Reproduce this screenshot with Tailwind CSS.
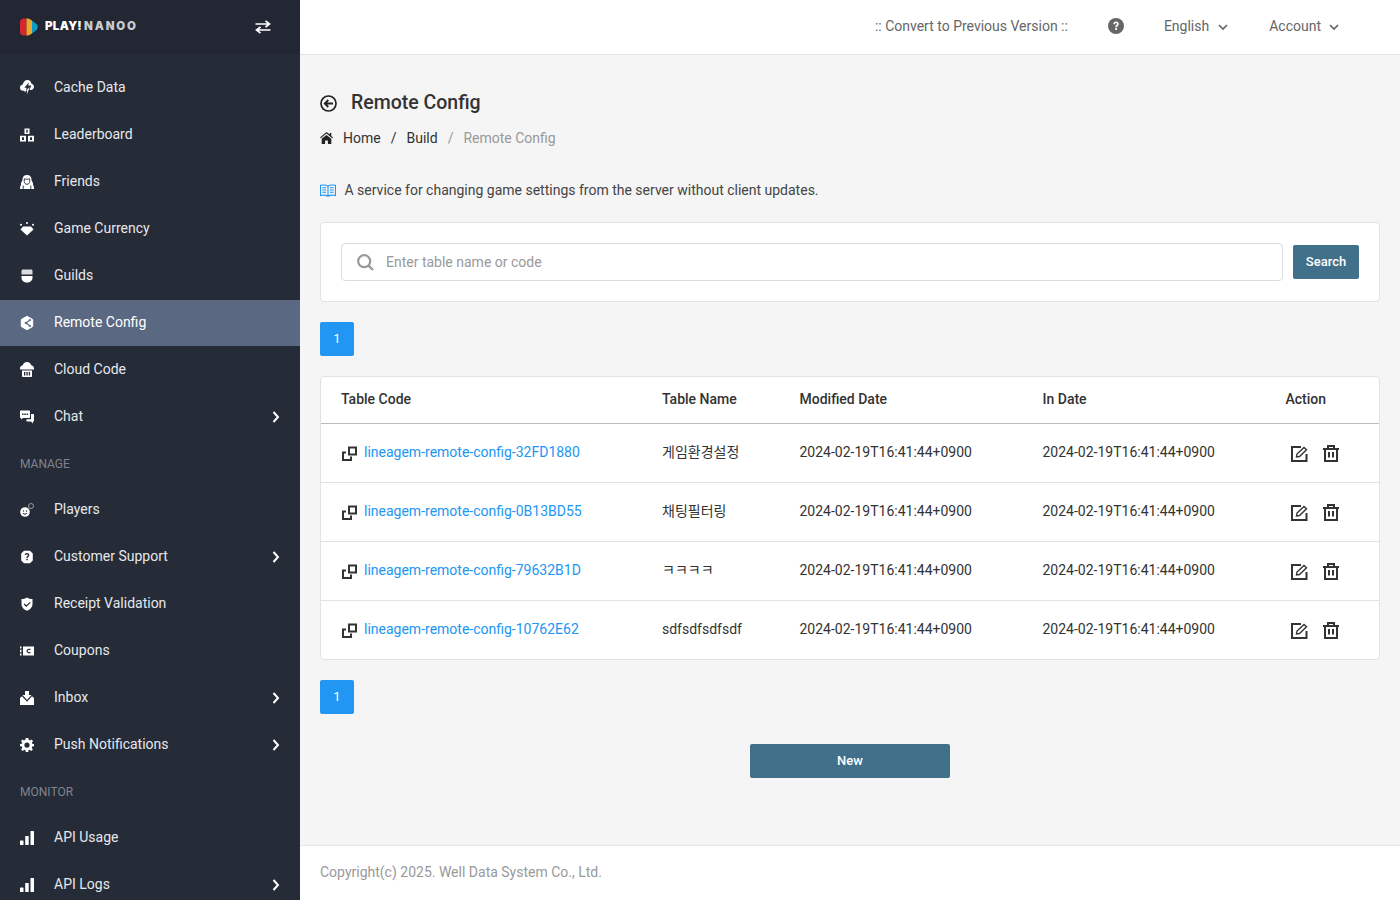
<!DOCTYPE html>
<html lang="en">
<head>
    <meta charset="UTF-8">
    <title>Remote Config</title>
    <script src="https://cdn.jsdelivr.net/npm/@tailwindcss/browser@4"></script>
</head>
<body class="h-screen overflow-hidden flex bg-[#f5f5f5] text-[14px] text-[#333] font-['Roboto','Noto_Sans_CJK_KR',sans-serif]">
    <!-- Sidebar -->
    <aside class="w-[300px] shrink-0 h-full overflow-hidden bg-[#252b37] text-[#e6e8ec]">
        <div class="h-[54px] bg-[#222733] flex items-center pl-[20px] pr-[29px]">
            <svg class="w-[18px] h-[18px]" viewBox="0 0 18 18">
                <path d="M4 0.5H6.5V17.5H4A4 4 0 0 1 0 13.5V4.5A4 4 0 0 1 4 0.5Z" fill="#d8262f"/>
                <path d="M6.5 0.5H8.5L12 2.6V15.4L8.5 17.5H6.5Z" fill="#eda92c"/>
                <path d="M12 2.6L17 6.6Q18.4 9 17 11.4L12 15.4Z" fill="#0f9cc5"/>
            </svg>
            <span class="ml-[7px] text-[11.5px] leading-none font-black tracking-[0.3px] font-['Inter',sans-serif] text-white">PLAY!<span class="text-[#c9cacc] ml-[2px] tracking-[1.8px]">NANOO</span></span>
            <svg class="ml-auto w-[16px] h-[14px]" viewBox="0 0 16 14" fill="none" stroke="#fff" stroke-width="1.7">
                <path d="M0.5 4H14.5M10.5 0.8L14.5 4L10.5 7"/>
                <path d="M15.5 10H1.5M5.5 7L1.5 10L5.5 13.2"/>
            </svg>
        </div>
        <nav class="pt-[10px]">
            <a class="flex items-center h-[47px] pl-[20px] pr-[20px]">
                <svg class="w-[14px] h-[15px] mr-[20px]" viewBox="0 0 14 15" fill="#fff"><path d="M7.500 0C9.600 0 11 1.500 11.300 3.400C12.900 3.800 14 5.100 14 6.700C14 8.500 12.600 10 10.800 10H9.600L11.300 5.500H8.200L9 2.200L4.300 7.800H6.700L5.300 12.500L4.200 10.800H3C1.300 10.800 0 9.400 0 7.700C0 6.100 1.100 4.800 2.700 4.500C3.300 1.900 5.200 0 7.500 0Z"/><path d="M9.800 7.200L6.800 14.500L7.200 10.500H5.800Z"/></svg>
                Cache Data
            </a>
            <a class="flex items-center h-[47px] pl-[20px] pr-[20px]">
                <svg class="w-[14px] h-[14px] mr-[20px]" viewBox="0 0 14 14" fill="#fff" fill-rule="evenodd"><path d="M4.500 0.500H9.500V6H4.500ZM6.300 1.800V4.700H7.700V1.800Z"/><path d="M0 7.800H6V13.500H0ZM2 9.200V12H4V9.200Z"/><path d="M8 7.800H14V13.500H8ZM10 9.200V12H12V9.200Z"/></svg>
                Leaderboard
            </a>
            <a class="flex items-center h-[47px] pl-[20px] pr-[20px]">
                <svg class="w-[14px] h-[14px] mr-[20px]" viewBox="0 0 14 14"><path d="M7 0C10 0 11.500 2 11.500 4.500C11.500 6 12.500 6.800 13 8V10C13.600 10.600 14 11.500 14 14H0C0 11.500 0.400 10.600 1 10V8C1.500 6.800 2.500 6 2.500 4.500C2.500 2 4 0 7 0Z" fill="#fff"/><path d="M4.300 3.800C5.800 4.300 8.200 4.300 9.700 3.800V6.500C9.700 8.200 8.500 9.300 7 9.300C5.500 9.300 4.300 8.200 4.300 6.500Z" fill="#fff" stroke="#252b37" stroke-width="0.900"/><path d="M3.200 10.500V14M10.800 10.500V14" stroke="#252b37" stroke-width="0.900"/></svg>
                Friends
            </a>
            <a class="flex items-center h-[47px] pl-[20px] pr-[20px]">
                <svg class="w-[14px] h-[14px] mr-[20px]" viewBox="0 0 14 14" fill="#fff"><path d="M3 4.500H11L13.500 7.500L7 13.500L0.500 7.500Z"/><circle cx="1" cy="2.800" r="1"/><circle cx="7" cy="1" r="1"/><circle cx="13" cy="2.800" r="1"/></svg>
                Game Currency
            </a>
            <a class="flex items-center h-[47px] pl-[20px] pr-[20px]">
                <svg class="w-[14px] h-[14px] mr-[20px]" viewBox="0 0 14 14" fill="#fff"><path d="M3 0.500H11C12 0.500 12.500 1 12.500 2V5.500H1.500V2C1.500 1 2 0.500 3 0.500Z" fill="#d9dbde"/><path d="M1.500 7H12.500V9C12.500 11.500 10 13.500 7 13.500C4 13.500 1.500 11.500 1.500 9Z"/></svg>
                Guilds
            </a>
            <a class="flex items-center h-[46px] mt-[1px] pb-[1px] pl-[20px] pr-[20px] bg-[#5b6882] text-white">
                <svg class="w-[14px] h-[14px] mr-[20px]" viewBox="0 0 14 14"><path d="M7 0.300L12.700 3.500V10.500L7 13.700L1.300 10.500V3.500Z" fill="#fff" stroke="#fff" stroke-linejoin="round"/><path d="M10 4L6 7L10 10" fill="none" stroke="#5b6882" stroke-width="1.100"/><circle cx="6" cy="7" r="1.300" fill="#5b6882"/><circle cx="10" cy="4" r="1.100" fill="#5b6882"/><circle cx="10" cy="10" r="1.100" fill="#5b6882"/></svg>
                Remote Config
            </a>
            <a class="flex items-center h-[47px] pl-[20px] pr-[20px]">
                <svg class="w-[14px] h-[15px] mr-[20px]" viewBox="0 0 14 15" fill="#fff" fill-rule="evenodd"><path d="M7 0C9.300 0 10.800 1.400 11.300 3.200C12.900 3.500 14 4.800 14 6.500V7.500H0V6.500C0 4.800 1.100 3.500 2.700 3.200C3.200 1.400 4.700 0 7 0Z"/><path d="M2 8.500H12V14C12 14.600 11.600 15 11 15H3C2.400 15 2 14.600 2 14ZM4 10V13.500H5.300V10ZM6.400 10V13.500H7.700V10ZM8.800 10V13.500H10.100V10Z"/></svg>
                Cloud Code
            </a>
            <a class="flex items-center h-[47px] pl-[20px] pr-[20px]">
                <svg class="w-[14px] h-[14px] mr-[20px]" viewBox="0 0 14 14" fill="#fff" fill-rule="evenodd"><path d="M1 0.500H9C9.600 0.500 10 0.900 10 1.500V7C10 7.600 9.600 8 9 8H3L1 9.500V8C0.400 8 0 7.600 0 7V1.500C0 0.900 0.400 0.500 1 0.500ZM2 3.500V5H3.500V3.500ZM4.300 3.500V5H5.800V3.500ZM6.600 3.500V5H8.100V3.500Z"/><path d="M11 4H13C13.600 4 14 4.400 14 5V10.500C14 11.100 13.600 11.500 13 11.500V13.500L11 11.500H6.500V9.300H11Z"/></svg>
                Chat
                <svg class="ml-auto w-[8px] h-[12px]" viewBox="0 0 8 12" fill="none" stroke="#fff" stroke-width="2"><path d="M1.500 1L6 6L1.500 11"/></svg>
            </a>
            <div class="h-[46px] pt-[1px] pl-[20px] flex items-center text-[12px] text-[#7e848f]">MANAGE</div>
            <a class="flex items-center h-[47px] pl-[20px] pr-[20px]">
                <svg class="w-[14px] h-[14px] mr-[20px]" viewBox="0 0 14 14"><circle cx="5" cy="9" r="4.800" fill="#fff"/><circle cx="3.500" cy="8" r="0.700" fill="#252b37"/><circle cx="6.500" cy="8" r="0.700" fill="#252b37"/><path d="M3 10.300Q5 12.300 7 10.300" fill="none" stroke="#252b37"/><circle cx="11" cy="3" r="2.500" fill="none" stroke="#c9cacc" stroke-width="0.700"/></svg>
                Players
            </a>
            <a class="flex items-center h-[47px] pl-[20px] pr-[20px]">
                <svg class="w-[14px] h-[14px] mr-[20px]" viewBox="0 0 14 14" fill="#fff" fill-rule="evenodd"><path d="M4 0.800H10L12.800 3.600V10.400L10 13.200H4L1.200 10.400V3.600ZM7 3C5.700 3 4.800 3.800 4.700 5H6.100C6.200 4.500 6.500 4.200 7 4.200C7.500 4.200 7.900 4.500 7.900 5C7.900 5.800 6.400 6 6.400 8H7.700C7.700 6.800 9.300 6.500 9.300 4.900C9.300 3.700 8.300 3 7 3ZM6.300 8.800V10.300H7.800V8.800Z"/></svg>
                Customer Support
                <svg class="ml-auto w-[8px] h-[12px]" viewBox="0 0 8 12" fill="none" stroke="#fff" stroke-width="2"><path d="M1.500 1L6 6L1.500 11"/></svg>
            </a>
            <a class="flex items-center h-[47px] pl-[20px] pr-[20px]">
                <svg class="w-[14px] h-[14px] mr-[20px]" viewBox="0 0 14 14" fill="#fff" fill-rule="evenodd"><path d="M7 0.500C9 1.500 10.500 2 12.500 2V7C12.500 10.500 10 12.500 7 13.800C4 12.500 1.500 10.500 1.500 7V2C3.500 2 5 1.500 7 0.500ZM9.800 5L6.300 8.300L4.500 6.600L3.700 7.400L6.300 9.900L10.600 5.800Z"/></svg>
                Receipt Validation
            </a>
            <a class="flex items-center h-[47px] pl-[20px] pr-[20px]">
                <svg class="w-[14px] h-[14px] mr-[20px]" viewBox="0 0 14 14" fill="#fff" fill-rule="evenodd"><path d="M0 2.500H1.500V4.500H0ZM0 5.800H1.500V8.200H0ZM0 9.500H1.500V11.500H0ZM3 2.500H14V11.500H3ZM9 4.800C7.600 4.800 6.500 5.800 6.500 7C6.500 8.200 7.600 9.200 9 9.200H10.500V8H9C8.300 8 7.800 7.600 7.800 7C7.800 6.400 8.300 6 9 6H10.500V4.800Z"/></svg>
                Coupons
            </a>
            <a class="flex items-center h-[47px] pl-[20px] pr-[20px]">
                <svg class="w-[14px] h-[14px] mr-[20px]" viewBox="0 0 14 14" fill="#fff"><path d="M5 0H9V4H11.500L7 9L2.500 4H5Z"/><path d="M0 7L2 5.300L7 10.800L12 5.300L14 7V14H0Z"/></svg>
                Inbox
                <svg class="ml-auto w-[8px] h-[12px]" viewBox="0 0 8 12" fill="none" stroke="#fff" stroke-width="2"><path d="M1.500 1L6 6L1.500 11"/></svg>
            </a>
            <a class="flex items-center h-[47px] pl-[20px] pr-[20px]">
                <svg class="w-[14px] h-[14px] mr-[20px]" viewBox="0 0 14 14" fill="#fff" fill-rule="evenodd"><path d="M5.700 0H8.300L8.700 1.800L10 2.400L11.700 1.400L13.100 3.200L11.800 4.500L12.200 5.800L14 6V8.300L12.200 8.600L11.700 9.900L12.900 11.400L11.300 13L9.800 11.800L8.500 12.300L8.300 14H5.700L5.500 12.300L4.200 11.800L2.700 13L1.100 11.400L2.300 9.900L1.800 8.600L0 8.300V6L1.800 5.800L2.300 4.500L1 3.200L2.300 1.400L4 2.400L5.300 1.800ZM7 4.500A2.600 2.600 0 1 0 7 9.700A2.600 2.600 0 1 0 7 4.500Z"/></svg>
                Push Notifications
                <svg class="ml-auto w-[8px] h-[12px]" viewBox="0 0 8 12" fill="none" stroke="#fff" stroke-width="2"><path d="M1.500 1L6 6L1.500 11"/></svg>
            </a>
            <div class="h-[46px] pt-[1px] pl-[20px] flex items-center text-[12px] text-[#7e848f]">MONITOR</div>
            <a class="flex items-center h-[47px] pl-[20px] pr-[20px]">
                <svg class="w-[14px] h-[14px] mr-[20px]" viewBox="0 0 14 14" fill="#fff"><rect x="0" y="9.500" width="3.500" height="4.500" rx="0.500"/><rect x="5.200" y="5" width="3.500" height="9" rx="0.500"/><rect x="10.500" y="0" width="3.500" height="14" rx="0.500"/></svg>
                API Usage
            </a>
            <a class="flex items-center h-[47px] pl-[20px] pr-[20px]">
                <svg class="w-[14px] h-[14px] mr-[20px]" viewBox="0 0 14 14" fill="#fff"><rect x="0" y="9.500" width="3.500" height="4.500" rx="0.500"/><rect x="5.200" y="5" width="3.500" height="9" rx="0.500"/><rect x="10.500" y="0" width="3.500" height="14" rx="0.500"/></svg>
                API Logs
                <svg class="ml-auto w-[8px] h-[12px]" viewBox="0 0 8 12" fill="none" stroke="#fff" stroke-width="2"><path d="M1.500 1L6 6L1.500 11"/></svg>
            </a>
        </nav>
    </aside>

    <div class="flex-1 min-w-0 h-full flex flex-col">
        <!-- Top bar -->
        <header class="h-[55px] shrink-0 bg-white border-b border-[#e4e4e4] pb-[2px] flex items-center justify-end text-[#666]">
            <span>:: Convert to Previous Version ::</span>
            <svg class="ml-[40px] w-[16px] h-[16px]" viewBox="0 0 16 16"><circle cx="8" cy="8" r="8" fill="#666"/><path d="M5.300 6.200C5.400 4.600 6.500 3.500 8.100 3.500C9.700 3.500 10.800 4.500 10.800 5.900C10.800 7.700 9 7.800 9 9.300H7.200C7.200 7.300 9 7.100 9 6C9 5.500 8.600 5.100 8.100 5.100C7.500 5.100 7.100 5.600 7 6.300Z" fill="#fff"/><rect x="7.200" y="10.100" width="1.800" height="1.900" fill="#fff"/></svg>
            <span class="ml-[40px]">English</span>
            <svg class="ml-[9px] mt-[2px] w-[10px] h-[7px]" viewBox="0 0 10 7" fill="none" stroke="#666" stroke-width="1.700"><path d="M1 1L5 5L9 1"/></svg>
            <span class="ml-[41px]">Account</span>
            <svg class="ml-[8px] mr-[61px] mt-[2px] w-[10px] h-[7px]" viewBox="0 0 10 7" fill="none" stroke="#666" stroke-width="1.700"><path d="M1 1L5 5L9 1"/></svg>
        </header>

        <main class="flex-1 min-h-0 px-[20px] pt-[34px]">
            <div class="flex items-center h-[28px]">
                <svg class="w-[17px] h-[17px] mr-[14px]" viewBox="0 0 17 17" fill="none" stroke="#222" stroke-width="1.700"><circle cx="8.500" cy="8.500" r="7.500"/><path d="M13 8.500H5M8.300 5L4.800 8.500L8.300 12" stroke-width="1.900"/></svg>
                <h1 class="text-[19.5px] font-medium text-[#333]">Remote Config</h1>
            </div>
            <div class="flex items-center h-[20px] mt-[11px]">
                <svg class="w-[13px] h-[12px] mr-[10px]" viewBox="0 0 13 12" fill="#222"><path d="M6.500 0L9.700 2.600V1H11.300V3.900L13 5.400L12.200 6.300L6.500 1.600L0.800 6.300L0 5.400Z"/><path d="M6.500 2.900L11.300 6.800V12H7.900V8.400H5.100V12H1.700V6.800Z"/></svg>
                <span>Home</span>
                <span class="mx-[10px]">/</span>
                <span>Build</span>
                <span class="mx-[10px] text-[#999]">/</span>
                <span class="text-[#999]">Remote Config</span>
            </div>
            <div class="flex items-center h-[20px] mt-[32px]">
                <svg class="w-[16px] h-[13px] mr-[8.500px]" viewBox="0 0 16 13" fill="none" stroke="#2196f3" stroke-width="1.100"><path d="M8 2.200C6.500 1 3 0.800 0.500 1.200V11.500C3 11 6.500 11.200 8 12.300C9.500 11.200 13 11 15.500 11.500V1.200C13 0.800 9.500 1 8 2.200ZM8 2.200V12.300"/><path d="M2.300 3.800H6M2.300 6H6M2.300 8.200H6M10 3.800H13.700M10 6H13.700M10 8.200H13.700"/></svg>
                <span class="text-[#444]">A service for changing game settings from the server without client updates.</span>
            </div>

            <!-- Search -->
            <div class="mt-[22px] h-[80px] bg-white border border-[#e2e2e2] rounded-[4px] flex items-center pl-[20px] pr-[20px]">
                <div class="flex-1 h-[38px] border border-[#dcdcdc] rounded-[4px] flex items-center pl-[15px]">
                    <svg class="w-[17px] h-[17px] mr-[12px]" viewBox="0 0 17 17" fill="none" stroke="#999" stroke-width="2.200"><circle cx="7.200" cy="7.200" r="6"/><path d="M11.600 11.600L16 16"/></svg>
                    <span class="text-[#999]">Enter table name or code</span>
                </div>
                <button class="ml-[10px] w-[66px] h-[34px] bg-[#41708a] rounded-[2px] text-white text-[13px] font-medium">Search</button>
            </div>

            <div class="mt-[20px] w-[34px] h-[34px] bg-[#2196f3] rounded-[2px] text-white text-[13px] flex items-center justify-center">1</div>

            <!-- Table -->
            <div class="mt-[20px] bg-white border border-[#e2e2e2] rounded-[4px] overflow-hidden">
                <table class="w-full table-fixed border-collapse">
                    <colgroup>
                        <col class="w-[321px]"><col class="w-[137.500px]"><col class="w-[243px]"><col class="w-[243px]"><col>
                    </colgroup>
                    <thead>
                        <tr class="h-[46px] border-b border-[#bbb] text-left font-medium">
                            <th class="pl-[20px] font-medium">Table Code</th>
                            <th class="pl-[20px] font-medium">Table Name</th>
                            <th class="pl-[20px] font-medium">Modified Date</th>
                            <th class="pl-[20px] font-medium">In Date</th>
                            <th class="pl-[20px] font-medium">Action</th>
                        </tr>
                    </thead>
                    <tbody>
                        <tr class="h-[59px] border-b border-[#e2e2e2]">
                            <td class="pl-[20px]"><div class="flex items-center">
                                <svg class="w-[17px] h-[17px] mr-[6px]" viewBox="0 0 17 17" fill="none" stroke="#333" stroke-width="2"><rect x="8" y="3.500" width="7" height="7"/><path d="M5 8.500H2V16H10V12.500"/></svg>
                                <a class="text-[#2196f3]">lineagem-remote-config-32FD1880</a></div></td>
                            <td class="pl-[20px]">게임환경설정</td>
                            <td class="pl-[20px]">2024-02-19T16:41:44+0900</td>
                            <td class="pl-[20px]">2024-02-19T16:41:44+0900</td>
                            <td class="pl-[20px]"><div class="flex items-center pl-[5px] pt-[2px] gap-[15px]">
                                <svg class="w-[17px] h-[16px]" viewBox="0 0 17 16" fill="none" stroke="#333" stroke-width="2"><path d="M15.500 8V15H1V1H10"/><path d="M5.500 11L6 8L13 1.500L15.500 3.800L8.500 10.500Z" stroke-width="1.400"/></svg>
                                <svg class="w-[16px] h-[17px]" viewBox="0 0 16 17" fill="none" stroke="#333" stroke-width="2"><path d="M0 4H16M2 4V16H14V4M5 4V1H11V4M6 7V12.500M10 7V12.500"/></svg>
                            </div></td>
                        </tr>
                        <tr class="h-[59px] border-b border-[#e2e2e2]">
                            <td class="pl-[20px]"><div class="flex items-center">
                                <svg class="w-[17px] h-[17px] mr-[6px]" viewBox="0 0 17 17" fill="none" stroke="#333" stroke-width="2"><rect x="8" y="3.500" width="7" height="7"/><path d="M5 8.500H2V16H10V12.500"/></svg>
                                <a class="text-[#2196f3]">lineagem-remote-config-0B13BD55</a></div></td>
                            <td class="pl-[20px]">채팅필터링</td>
                            <td class="pl-[20px]">2024-02-19T16:41:44+0900</td>
                            <td class="pl-[20px]">2024-02-19T16:41:44+0900</td>
                            <td class="pl-[20px]"><div class="flex items-center pl-[5px] pt-[2px] gap-[15px]">
                                <svg class="w-[17px] h-[16px]" viewBox="0 0 17 16" fill="none" stroke="#333" stroke-width="2"><path d="M15.500 8V15H1V1H10"/><path d="M5.500 11L6 8L13 1.500L15.500 3.800L8.500 10.500Z" stroke-width="1.400"/></svg>
                                <svg class="w-[16px] h-[17px]" viewBox="0 0 16 17" fill="none" stroke="#333" stroke-width="2"><path d="M0 4H16M2 4V16H14V4M5 4V1H11V4M6 7V12.500M10 7V12.500"/></svg>
                            </div></td>
                        </tr>
                        <tr class="h-[59px] border-b border-[#e2e2e2]">
                            <td class="pl-[20px]"><div class="flex items-center">
                                <svg class="w-[17px] h-[17px] mr-[6px]" viewBox="0 0 17 17" fill="none" stroke="#333" stroke-width="2"><rect x="8" y="3.500" width="7" height="7"/><path d="M5 8.500H2V16H10V12.500"/></svg>
                                <a class="text-[#2196f3]">lineagem-remote-config-79632B1D</a></div></td>
                            <td class="pl-[20px]">ㅋㅋㅋㅋ</td>
                            <td class="pl-[20px]">2024-02-19T16:41:44+0900</td>
                            <td class="pl-[20px]">2024-02-19T16:41:44+0900</td>
                            <td class="pl-[20px]"><div class="flex items-center pl-[5px] pt-[2px] gap-[15px]">
                                <svg class="w-[17px] h-[16px]" viewBox="0 0 17 16" fill="none" stroke="#333" stroke-width="2"><path d="M15.500 8V15H1V1H10"/><path d="M5.500 11L6 8L13 1.500L15.500 3.800L8.500 10.500Z" stroke-width="1.400"/></svg>
                                <svg class="w-[16px] h-[17px]" viewBox="0 0 16 17" fill="none" stroke="#333" stroke-width="2"><path d="M0 4H16M2 4V16H14V4M5 4V1H11V4M6 7V12.500M10 7V12.500"/></svg>
                            </div></td>
                        </tr>
                        <tr class="h-[59px]">
                            <td class="pl-[20px]"><div class="flex items-center">
                                <svg class="w-[17px] h-[17px] mr-[6px]" viewBox="0 0 17 17" fill="none" stroke="#333" stroke-width="2"><rect x="8" y="3.500" width="7" height="7"/><path d="M5 8.500H2V16H10V12.500"/></svg>
                                <a class="text-[#2196f3]">lineagem-remote-config-10762E62</a></div></td>
                            <td class="pl-[20px]">sdfsdfsdfsdf</td>
                            <td class="pl-[20px]">2024-02-19T16:41:44+0900</td>
                            <td class="pl-[20px]">2024-02-19T16:41:44+0900</td>
                            <td class="pl-[20px]"><div class="flex items-center pl-[5px] pt-[2px] gap-[15px]">
                                <svg class="w-[17px] h-[16px]" viewBox="0 0 17 16" fill="none" stroke="#333" stroke-width="2"><path d="M15.500 8V15H1V1H10"/><path d="M5.500 11L6 8L13 1.500L15.500 3.800L8.500 10.500Z" stroke-width="1.400"/></svg>
                                <svg class="w-[16px] h-[17px]" viewBox="0 0 16 17" fill="none" stroke="#333" stroke-width="2"><path d="M0 4H16M2 4V16H14V4M5 4V1H11V4M6 7V12.500M10 7V12.500"/></svg>
                            </div></td>
                        </tr>
                    </tbody>
                </table>
            </div>

            <div class="mt-[20px] w-[34px] h-[34px] bg-[#2196f3] rounded-[2px] text-white text-[13px] flex items-center justify-center">1</div>

            <div class="mt-[30px] flex justify-center">
                <button class="w-[200px] h-[34px] bg-[#41708a] rounded-[2px] text-white text-[13px] font-medium">New</button>
            </div>
        </main>

        <footer class="h-[55px] shrink-0 bg-white border-t border-[#e4e4e4] px-[20px] pb-[2px] flex items-center text-[#999]">
            Copyright(c) 2025. Well Data System Co., Ltd.
        </footer>
    </div>
</body>
</html>
